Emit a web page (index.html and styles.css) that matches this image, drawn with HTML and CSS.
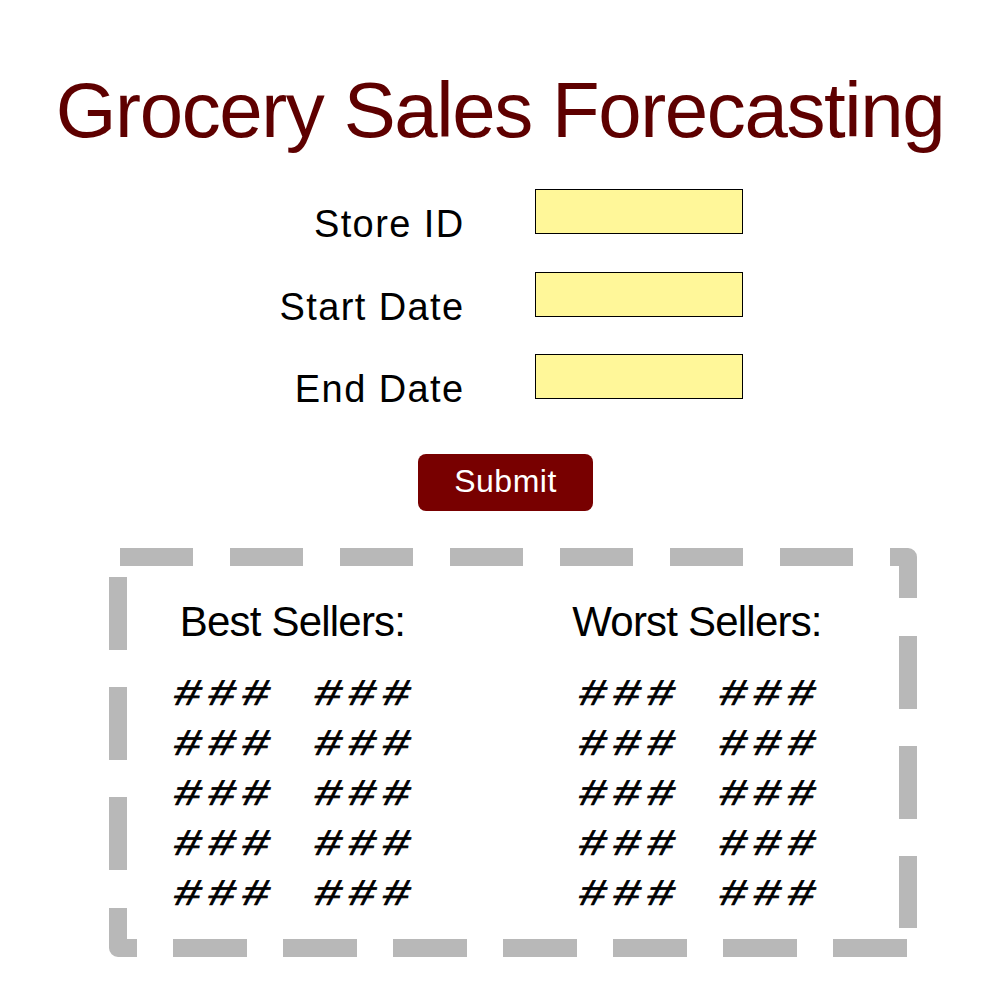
FILE: index.html
```html
<!DOCTYPE html>
<html lang="en">
<head>
<meta charset="utf-8">
<title>Grocery Sales Forecasting</title>
<link rel="stylesheet" href="styles.css">
</head>
<body>
  <h1 class="title">Grocery Sales Forecasting</h1>

  <form class="form">
    <label class="label" for="store">Store ID</label>
    <input class="field" id="store" type="text">
    <label class="label" for="start">Start Date</label>
    <input class="field" id="start" type="text">
    <label class="label" for="end">End Date</label>
    <input class="field" id="end" type="text">
  </form>

  <div class="actions">
    <button class="submit" type="button">Submit</button>
  </div>

  <section class="results">
    <svg class="frame" width="808" height="409" viewBox="0 0 808 409" aria-hidden="true">
      <g fill="none" stroke="#b8b8b8" stroke-width="18" stroke-linecap="butt" stroke-linejoin="round">
        <path d="M11 9H84M121 9H194M231 9H304M341 9H414M451 9H524M561 9H634M671 9H744"/>
        <path d="M781 9H799V50"/>
        <path d="M799 88V161M799 198V271M799 308V380"/>
        <path d="M64 400H138M174 400H248M284 400H358M394 400H468M504 400H578M614 400H688M724 400H798"/>
        <path d="M9 360V400H28"/>
        <path d="M9 29V102M9 139V212M9 249V322"/>
      </g>
    </svg>
    <div class="column">
      <h2 class="heading">Best Sellers:</h2>
      <div class="grid">
        <span class="cell">###</span><span class="cell">###</span>
        <span class="cell">###</span><span class="cell">###</span>
        <span class="cell">###</span><span class="cell">###</span>
        <span class="cell">###</span><span class="cell">###</span>
        <span class="cell">###</span><span class="cell">###</span>
      </div>
    </div>
    <div class="column">
      <h2 class="heading">Worst Sellers:</h2>
      <div class="grid">
        <span class="cell">###</span><span class="cell">###</span>
        <span class="cell">###</span><span class="cell">###</span>
        <span class="cell">###</span><span class="cell">###</span>
        <span class="cell">###</span><span class="cell">###</span>
        <span class="cell">###</span><span class="cell">###</span>
      </div>
    </div>
  </section>
</body>
</html>
```

FILE: styles.css
```css
html, body {
  margin: 0;
  padding: 0;
  background: #ffffff;
}

body {
  font-family: "Liberation Sans", Arial, Helvetica, sans-serif;
  color: #000000;
  width: 1000px;
}

.title {
  margin: 65px 0 0 0;
  font-size: 78px;
  line-height: 90px;
  font-weight: normal;
  letter-spacing: -1.4px;
  color: #5e0000;
  text-align: center;
}

.form {
  display: grid;
  grid-template-columns: 250px 208px;
  grid-auto-rows: 45px;
  column-gap: 72px;
  row-gap: 37.5px;
  margin: 34px 0 0 213px;
  width: 530px;
}

.label {
  font-size: 38px;
  line-height: 38px;
  letter-spacing: 1.4px;
  text-align: right;
  padding-top: 16px;
  margin-right: -1.5px;
  white-space: nowrap;
}

.field {
  box-sizing: border-box;
  width: 208px;
  height: 45px;
  margin: 0;
  padding: 0;
  border: 1px solid #000000;
  background: #fff799;
  outline: none;
}

.actions {
  display: flex;
  justify-content: center;
  padding-left: 11px;
  margin-top: 55px;
}

.submit {
  width: 175px;
  height: 57px;
  border: none;
  border-radius: 8px;
  background: #780000;
  color: #ffffff;
  font-family: "Liberation Sans", Arial, Helvetica, sans-serif;
  font-size: 32px;
  letter-spacing: 0.5px;
  padding: 0 0 2px 0;
  cursor: pointer;
}

.results {
  position: relative;
  box-sizing: border-box;
  width: 808px;
  height: 409px;
  margin: 37px 0 0 109px;
  padding: 50px 0 0 43.5px;
  display: flex;
  column-gap: 124.5px;
}

.frame {
  position: absolute;
  left: 0;
  top: 0;
}

.column {
  width: 280px;
  display: flex;
  flex-direction: column;
  align-items: center;
}

.heading {
  margin: 0;
  font-size: 42px;
  line-height: 48px;
  font-weight: normal;
  letter-spacing: -0.8px;
  white-space: nowrap;
}

.grid {
  display: grid;
  grid-template-columns: auto auto;
  column-gap: 29.2px;
  grid-auto-rows: 50px;
  margin: 22px 0 0 4px;
  transform: scaleX(1.3);
  transform-origin: center;
}

.cell {
  font-family: "Liberation Sans", Arial, sans-serif;
  font-size: 36px;
  line-height: 50px;
  letter-spacing: 6.2px;
  white-space: nowrap;
  -webkit-text-stroke: 0.7px #000000;
  transform: skewX(-10deg);
  transform-origin: 50% 70%;
}
```
